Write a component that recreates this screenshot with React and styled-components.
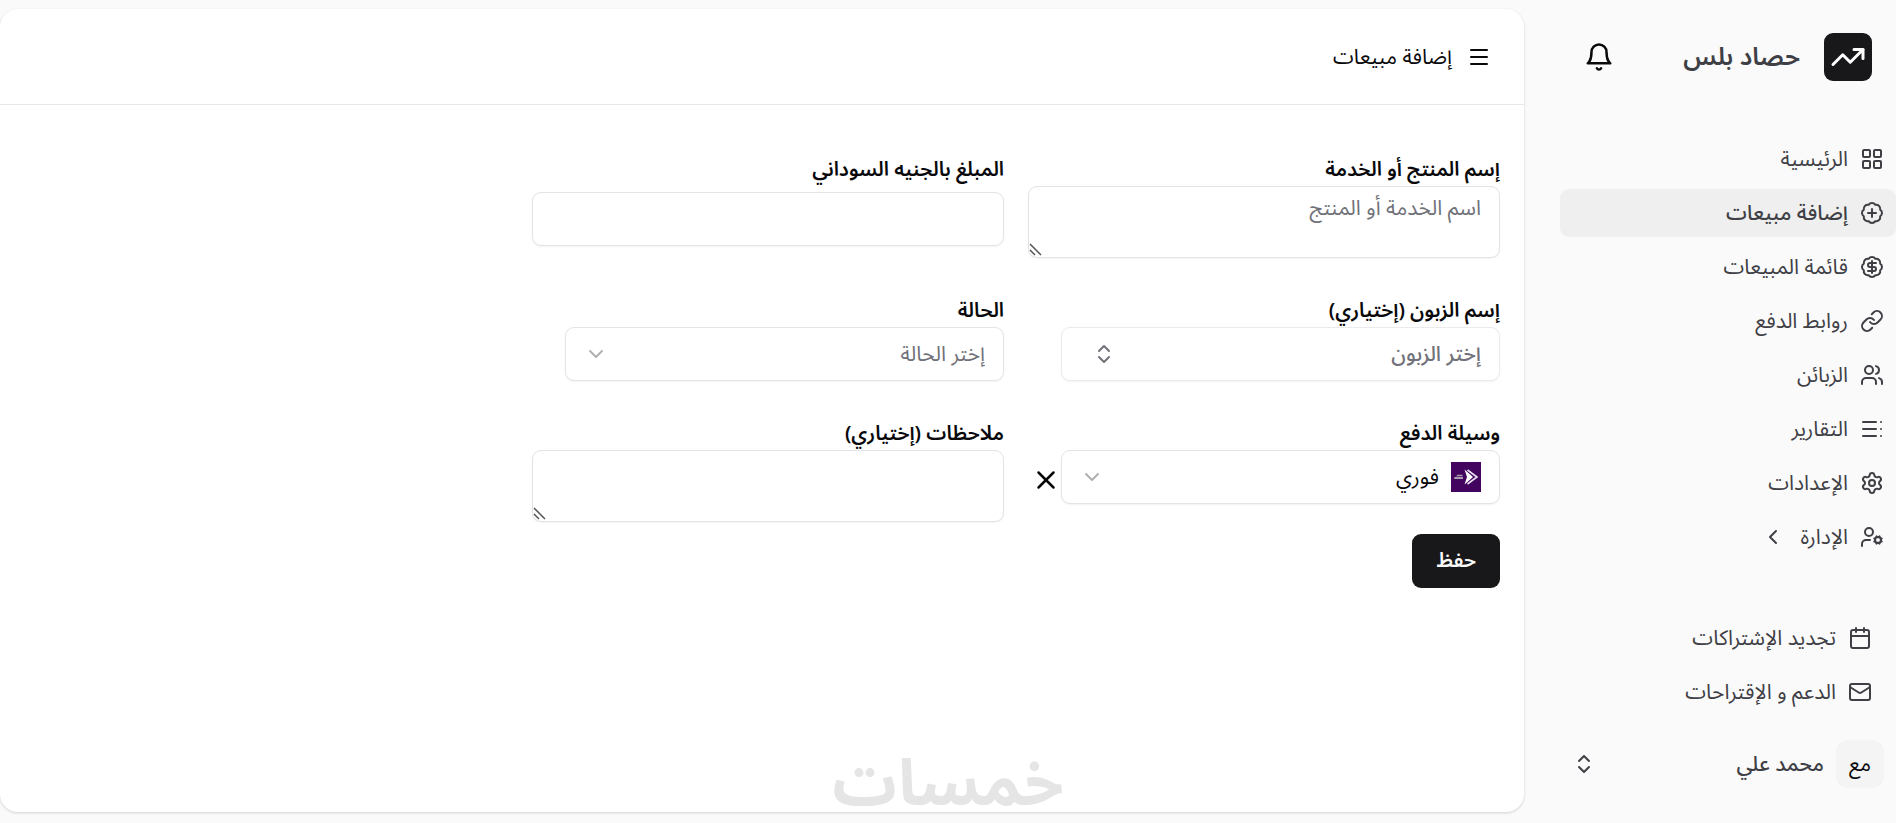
import React, { useState } from "react";
import styled, { createGlobalStyle, css } from "styled-components";
import {
  BadgeDollarSign,
  BadgePlus,
  Calendar,
  ChevronDown,
  ChevronLeft,
  ChevronsUpDown,
  LayoutGrid,
  Link,
  Mail,
  Menu,
  Settings,
  TableOfContents,
  TrendingUp,
  UserCog,
  Users,
  X,
} from "lucide-react";

const mainLinks = [
  { label: "الرئيسية", icon: LayoutGrid },
  { label: "إضافة مبيعات", icon: BadgePlus, active: true },
  { label: "قائمة المبيعات", icon: BadgeDollarSign },
  { label: "روابط الدفع", icon: Link },
  { label: "الزبائن", icon: Users },
  { label: "التقارير", icon: TableOfContents },
  { label: "الإعدادات", icon: Settings },
  { label: "الإدارة", icon: UserCog, nested: true },
];

const footerLinks = [
  { label: "تجديد الإشتراكات", icon: Calendar },
  { label: "الدعم و الإقتراحات", icon: Mail },
];

const NavItem = ({ item }) => {
  const Icon = item.icon;
  return (
    <NavLink href="#" $active={item.active}>
      <Icon size={24} />
      <span>{item.label}</span>
      {item.nested && <NestedArrow size={24} />}
    </NavLink>
  );
};

const BellIcon = () => (
  <svg
    width="30"
    height="30"
    viewBox="0 0 24 24"
    fill="none"
    stroke="currentColor"
    strokeWidth="2"
    strokeLinecap="round"
    strokeLinejoin="round"
    aria-hidden="true"
  >
    <path d="M6 8a6 6 0 0 1 12 0c0 7 3 9 3 9H3s3-2 3-9" />
    <path d="M10.3 21a1.94 1.94 0 0 0 3.4 0" />
  </svg>
);

const Sidebar = () => (
  <Side>
    <Brand>
      <Logo>
        <TrendingUp size={36} />
      </Logo>
      <BrandName>حصاد بلس</BrandName>
      <IconButton type="button" aria-label="الإشعارات">
        <BellIcon />
      </IconButton>
    </Brand>
    <Nav>
      {mainLinks.map((item) => (
        <NavItem key={item.label} item={item} />
      ))}
    </Nav>
    <FooterNav>
      {footerLinks.map((item) => (
        <NavItem key={item.label} item={item} />
      ))}
    </FooterNav>
    <Profile type="button">
      <Avatar>مع</Avatar>
      <UserName>محمد علي</UserName>
      <ChevronsUpDown size={24} />
    </Profile>
  </Side>
);

const FawryIcon = () => (
  <svg width="30" height="30" viewBox="0 0 30 30" aria-hidden="true">
    <rect width="30" height="30" fill="#43045f" />
    <path d="M13.500 7.500 22 15 13.500 22.500 16 15Z" fill="#fff" />
    <path d="M16.500 8 26 15 16.500 22" fill="none" stroke="#e9dff0" strokeWidth="1.600" />
    <path d="M6.500 12.800h5v1.400H5ZM3.500 15h8.500v2H3Z" fill="#a99fae" />
  </svg>
);

const SalesForm = () => {
  const [method, setMethod] = useState("fawry");

  return (
    <Form onSubmit={(e) => e.preventDefault()}>
      <Field>
        <Label htmlFor="product">إسم المنتج أو الخدمة</Label>
        <TextArea id="product" placeholder="اسم الخدمة أو المنتج" />
      </Field>
      <Field>
        <Label htmlFor="amount">المبلغ بالجنيه السوداني</Label>
        <Input id="amount" type="text" inputMode="decimal" />
      </Field>
      <Field $start>
        <Label htmlFor="customer">إسم الزبون (إختياري)</Label>
        <ControlRow>
          <Combo id="customer" type="button">
            <span>إختر الزبون</span>
            <ChevronsUpDown size={24} />
          </Combo>
        </ControlRow>
      </Field>
      <Field>
        <Label htmlFor="status">الحالة</Label>
        <ControlRow>
          <SelectBox>
            <Select id="status" defaultValue="" $muted>
              <option value="" disabled>
                إختر الحالة
              </option>
            </Select>
            <ChevronDown size={24} />
          </SelectBox>
        </ControlRow>
      </Field>
      <Field $start>
        <Label htmlFor="method">وسيلة الدفع</Label>
        <ControlRow>
          <SelectBox>
            {method === "fawry" && <FawryIcon />}
            <Select
              id="method"
              value={method}
              onChange={(e) => setMethod(e.target.value)}
            >
              <option value=""></option>
              <option value="fawry">فوري</option>
            </Select>
            <ChevronDown size={24} />
          </SelectBox>
          <ClearButton
            type="button"
            aria-label="مسح"
            onClick={() => setMethod("")}
          >
            <X size={30} />
          </ClearButton>
        </ControlRow>
      </Field>
      <Field>
        <Label htmlFor="notes">ملاحظات (إختياري)</Label>
        <TextArea id="notes" />
      </Field>
      <SaveButton type="submit">حفظ</SaveButton>
    </Form>
  );
};

const App = () => (
  <>
    <GlobalStyle />
    <Page dir="rtl" lang="ar">
      <Sidebar />
      <Card>
        <Header>
          <IconButton type="button" aria-label="القائمة">
            <Menu size={24} />
          </IconButton>
          <Title>إضافة مبيعات</Title>
        </Header>
        <SalesForm />
      </Card>
      <Watermark>خمسات</Watermark>
    </Page>
  </>
);

export default App;

const GlobalStyle = createGlobalStyle`
  * {
    box-sizing: border-box;
  }

  body {
    margin: 0;
    background: #fafafa;
    color: #09090b;
    font-family: "Noto Sans Arabic", "Noto Sans", "DejaVu Sans", sans-serif;
    font-size: 21px;
  }

  button,
  input,
  select,
  textarea {
    font: inherit;
    color: inherit;
  }
`;

const Page = styled.div`
  display: flex;
  min-height: 100vh;
`;

const Side = styled.aside`
  width: 372px;
  flex-shrink: 0;
  display: flex;
  flex-direction: column;
  color: #3f3f46;
`;

const Brand = styled.div`
  display: flex;
  align-items: center;
  gap: 24px;
  height: 114px;
  padding: 0 24px 0 60px;
`;

const Logo = styled.div`
  width: 48px;
  height: 48px;
  border-radius: 9px;
  background: #18181b;
  color: #fff;
  display: flex;
  align-items: center;
  justify-content: center;
`;

const BrandName = styled.h1`
  flex: 1;
  margin: 0;
  font-size: 25px;
  font-weight: 600;
`;

const IconButton = styled.button`
  display: flex;
  padding: 0;
  border: 0;
  background: none;
  color: #09090b;
  cursor: pointer;
`;

const ClearButton = styled(IconButton)`
  padding-top: 6px;
`;

const Nav = styled.nav`
  display: flex;
  flex-direction: column;
  gap: 6px;
  padding: 21px 0 0 36px;
`;

const FooterNav = styled(Nav)`
  margin-top: auto;
  padding: 0 12px 0 36px;
`;

const NavLink = styled.a`
  display: flex;
  align-items: center;
  gap: 12px;
  height: 48px;
  padding: 0 12px;
  border-radius: 9px;
  background: ${({ $active }) => ($active ? "#efefef" : "transparent")};
  color: inherit;
  font-weight: ${({ $active }) => ($active ? 500 : 400)};
  text-decoration: none;
`;

const NestedArrow = styled(ChevronLeft)`
  margin-right: 3px;
`;

const Profile = styled.button`
  display: flex;
  align-items: center;
  gap: 12px;
  margin: 12px 0 23px;
  padding: 12px 12px 12px 48px;
  border: 0;
  background: none;
  text-align: start;
  cursor: pointer;
`;

const Avatar = styled.span`
  width: 48px;
  height: 48px;
  border-radius: 12px;
  background: #f4f4f5;
  color: #09090b;
  display: flex;
  align-items: center;
  justify-content: center;
`;

const UserName = styled.span`
  flex: 1;
  font-weight: 500;
`;

const Card = styled.main`
  flex: 1;
  margin: 9px 0 11px;
  border-radius: 18px;
  background: #fff;
  box-shadow: 0 1px 3px rgba(0, 0, 0, 0.16);
`;

const Header = styled.header`
  display: flex;
  align-items: center;
  gap: 15px;
  height: 96px;
  padding: 0 33px;
  border-bottom: 1px solid #e8e8ea;
`;

const Title = styled.h2`
  margin: 0;
  font-size: 21px;
  font-weight: 400;
`;

const Form = styled.form`
  display: grid;
  grid-template-columns: repeat(3, minmax(0, 1fr));
  column-gap: 24px;
  padding: 48px 24px 0 36px;
`;

const Field = styled.div`
  grid-column-start: ${({ $start }) => ($start ? 1 : "auto")};
  display: flex;
  flex-direction: column;
  margin-bottom: 36px;
`;

const Label = styled.label`
  padding-top: 2px;
  font-size: 20px;
  font-weight: 600;
  line-height: 31px;
`;

const outlined = css`
  border: 1px solid #e4e4e7;
  border-radius: 9px;
  background: #fff;
  box-shadow: 0 1px 2px rgba(0, 0, 0, 0.05);
`;

const Input = styled.input`
  ${outlined}
  height: 54px;
  margin-top: 6px;
  padding: 0 18px;
`;

const TextArea = styled.textarea`
  ${outlined}
  height: 72px;
  padding: 7px 18px;
  line-height: 28px;

  &::placeholder {
    color: #71717a;
  }

  &::-webkit-resizer {
    background: url("data:image/svg+xml,%3Csvg xmlns='http://www.w3.org/2000/svg' width='15' height='15'%3E%3Cpath d='M1 2 12 13M1 8 6 13' stroke='%23555' stroke-width='1.5'/%3E%3C/svg%3E")
      no-repeat;
  }
`;

const ControlRow = styled.div`
  display: grid;
  grid-template-columns: 1fr 33px;
  align-items: center;
`;

const SelectBox = styled.div`
  ${outlined}
  display: flex;
  align-items: center;
  gap: 12px;
  height: 54px;
  padding: 0 18px;

  > svg:last-child {
    color: #b0b0b3;
  }
`;

const Select = styled.select`
  flex: 1;
  height: 100%;
  padding: 0;
  border: 0;
  outline: 0;
  appearance: none;
  background: none;
  color: ${({ $muted }) => ($muted ? "#71717a" : "#09090b")};
`;

const Combo = styled.button`
  ${outlined}
  display: flex;
  align-items: center;
  justify-content: space-between;
  height: 54px;
  padding: 0 18px 0 30px;
  border-color: #ebebed;
  color: #71717a;
  font-weight: 500;
`;

const SaveButton = styled.button`
  grid-column: 1;
  justify-self: start;
  height: 54px;
  margin-top: -24px;
  padding: 0 24px;
  border: 0;
  border-radius: 9px;
  background: #18181b;
  color: #fafafa;
  font-size: 20px;
  font-weight: 600;
  cursor: pointer;
`;

const Watermark = styled.div`
  position: fixed;
  right: 0;
  bottom: 0;
  left: 0;
  color: #e5e5e5;
  font-family: "Liberation Sans", "Noto Sans Arabic", sans-serif;
  font-size: 64px;
  font-weight: 700;
  line-height: 80px;
  text-align: center;
  pointer-events: none;
`;
